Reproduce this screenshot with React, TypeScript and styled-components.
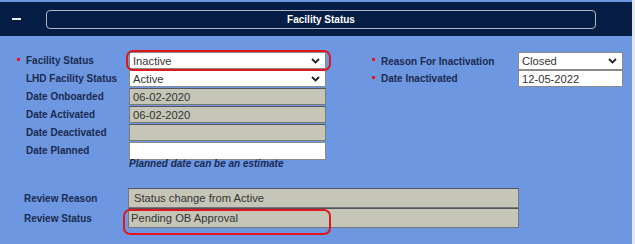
import { createGlobalStyle, styled } from "styled-components";

const GlobalStyle = createGlobalStyle`
  html, body {
    margin: 0;
    padding: 0;
    background: #e6e6e6;
  }
  * {
    box-sizing: border-box;
  }
`;

const Chevron = () => (
  <svg width="9" height="6" viewBox="0 0 9 6">
    <polyline
      points="1,1 4.5,4.5 8,1"
      fill="none"
      stroke="#222"
      strokeWidth="1.8"
    />
  </svg>
);

export default function App() {
  return (
    <>
      <GlobalStyle />
      <Frame>
        <Header>
          <Minus />
          <TitleBox>Facility Status</TitleBox>
        </Header>
        <Form>
          <TopRow>
            <LeftGrid>
              <Label $required>Facility Status</Label>
              <Ring>
                <Select>
                  <span>Inactive</span>
                  <Chevron />
                </Select>
              </Ring>
              <Label>LHD Facility Status</Label>
              <Select>
                <span>Active</span>
                <Chevron />
              </Select>
              <Label>Date Onboarded</Label>
              <ReadOnly>06-02-2020</ReadOnly>
              <Label>Date Activated</Label>
              <ReadOnly>06-02-2020</ReadOnly>
              <Label>Date Deactivated</Label>
              <ReadOnly />
              <Label>Date Planned</Label>
              <Input $tall />
              <span />
              <Hint>Planned date can be an estimate</Hint>
            </LeftGrid>
            <RightGrid>
              <Label $required>Reason For Inactivation</Label>
              <Select $tall>
                <span>Closed</span>
                <Chevron />
              </Select>
              <Label $required>Date Inactivated</Label>
              <Input>12-05-2022</Input>
            </RightGrid>
          </TopRow>
          <ReviewGrid>
            <Label>Review Reason</Label>
            <ReviewBox>Status change from Active</ReviewBox>
            <Label>Review Status</Label>
            <ReviewRing>
              <ReviewBox $tight>Pending OB Approval</ReviewBox>
            </ReviewRing>
          </ReviewGrid>
        </Form>
      </Frame>
    </>
  );
}

const Frame = styled.div`
  width: 632px;
  height: 244px;
  background-color: #6d97e1;
  padding-top: 2px;
  font-family: "Liberation Sans", Arial, sans-serif;
  overflow: hidden;
`;

const Header = styled.div`
  height: 34px;
  background-color: #061d45;
  display: flex;
  align-items: center;
  padding-left: 12px;
`;

const Minus = styled.div`
  width: 9px;
  height: 2px;
  background-color: #f0f0f0;
`;

const TitleBox = styled.div`
  margin-left: 25px;
  width: 550px;
  height: 19px;
  border: 1px solid #b4b8c4;
  border-radius: 4px;
  display: flex;
  align-items: center;
  justify-content: center;
  color: #ffffff;
  font-size: 10px;
  font-weight: bold;
`;

const Form = styled.div`
  display: flex;
  flex-direction: column;
  padding-top: 16px;
`;

const TopRow = styled.div`
  display: flex;
  flex-direction: row;
`;

const LeftGrid = styled.div`
  display: grid;
  grid-template-columns: 112px 197px;
  grid-auto-rows: 17px;
  row-gap: 1px;
  padding-left: 17px;
`;

const RightGrid = styled.div`
  display: grid;
  grid-template-columns: 146px 105px;
  grid-template-rows: 18px 17px;
  margin-left: 46px;
  align-content: start;
`;

const Label = styled.div<{ $required?: boolean }>`
  display: flex;
  align-items: center;
  padding-left: 9px;
  position: relative;
  font-size: 10px;
  font-weight: bold;
  color: #1b2a4f;
  white-space: nowrap;

  &::before {
    content: "";
    display: ${(p) => (p.$required ? "block" : "none")};
    position: absolute;
    left: 0;
    top: 6px;
    width: 3px;
    height: 3px;
    background-color: #e8141c;
  }
`;

const fieldBase = `
  display: flex;
  align-items: center;
  padding-left: 3px;
  font-size: 11.2px;
  color: #333333;
`;

const Select = styled.div<{ $tall?: boolean }>`
  ${fieldBase}
  justify-content: space-between;
  padding-right: 5px;
  height: ${(p) => (p.$tall ? "18px" : "17px")};
  background-color: #ffffff;
  border: 1px solid #8a8a8a;
`;

const Input = styled.div<{ $tall?: boolean }>`
  ${fieldBase}
  height: ${(p) => (p.$tall ? "18px" : "17px")};
  background-color: #ffffff;
  border: 1px solid #8a8a8a;
`;

const ReadOnly = styled.div`
  ${fieldBase}
  height: 17px;
  background-color: #c6c6b8;
  border: 1px solid #7a7a74;
  border-top-color: #55555a;
`;

const Ring = styled.div`
  position: relative;

  &::after {
    content: "";
    position: absolute;
    top: -2px;
    left: -3px;
    right: -5px;
    bottom: -2px;
    border: 2.5px solid #e0161f;
    border-radius: 7px;
    pointer-events: none;
  }
`;

const Hint = styled.div`
  font-size: 10px;
  font-weight: bold;
  font-style: italic;
  color: #1b2a4f;
  margin-top: -2px;
  white-space: nowrap;
`;

const ReviewGrid = styled.div`
  display: grid;
  grid-template-columns: 113px 391px;
  grid-auto-rows: 20px;
  padding-left: 15px;
  margin-top: 11px;
`;

const ReviewBox = styled.div<{ $tight?: boolean }>`
  ${fieldBase}
  height: 20px;
  padding-left: ${(p) => (p.$tight ? "2px" : "5px")};
  background-color: #c6c6b8;
  border: 1px solid #76767a;
  border-top-color: #4f5358;
`;

const ReviewRing = styled.div`
  position: relative;

  &::after {
    content: "";
    position: absolute;
    top: 1px;
    left: -5px;
    width: 204px;
    height: 22px;
    border: 2.5px solid #e0161f;
    border-radius: 7px;
    pointer-events: none;
  }
`;
